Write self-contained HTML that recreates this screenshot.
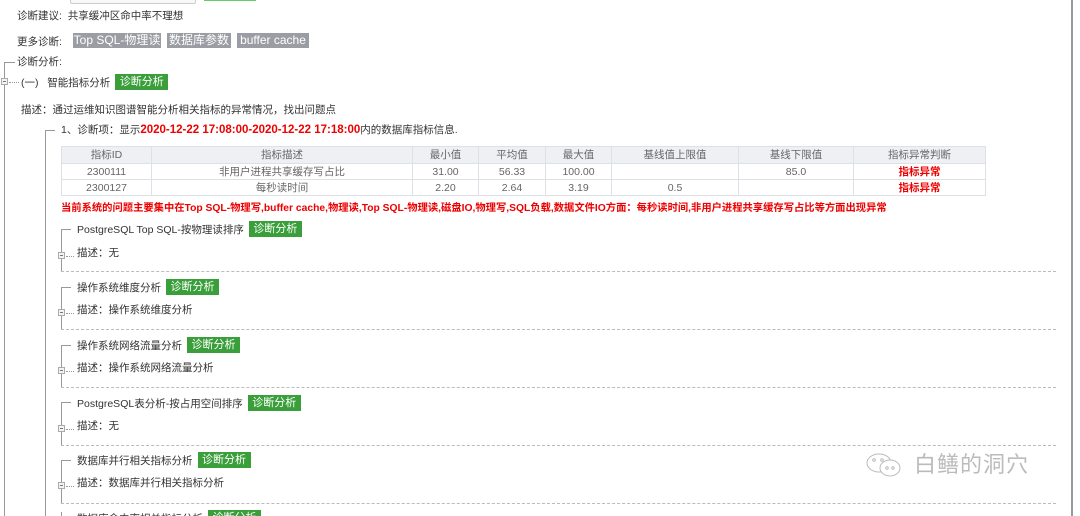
<!DOCTYPE html>
<html><head><meta charset="utf-8"><style>
*{margin:0;padding:0;box-sizing:border-box}
html,body{width:1080px;height:516px;overflow:hidden}
body{background:#fff;position:relative;font-family:"Liberation Sans","Noto Sans CJK SC",sans-serif;font-size:10.5px;color:#333}
.a{position:absolute;white-space:nowrap;line-height:14px}
.row{position:absolute;white-space:nowrap;display:flex;align-items:center;height:16px}
.g{display:inline-block;background:#3a9e3a;color:#fff;line-height:16px;height:16px;width:53px;text-align:center;font-size:11px;margin-left:5px}
.t{position:absolute;background:#9a9da3;color:#fff;line-height:15px;height:15px;text-align:center;font-size:12px}
.v{position:absolute;width:1px;background:#999}
.h{position:absolute;height:1px;background:#999}
.d{position:absolute;height:0;border-top:1px dashed #bbb}
.m{position:absolute;width:7px;height:7px;border:1px solid #aaa;background:#f4f4f4}
.m:after{content:"";position:absolute;left:1px;top:2px;width:3px;height:1px;background:#777}
.dot{position:absolute;height:0;border-top:1px dotted #999}
table{position:absolute;left:61px;top:146px;width:925px;border-collapse:collapse;font-size:10.5px;color:#666;table-layout:fixed}
td{border:1px solid #dde0e4;text-align:center;height:16px;line-height:14px;padding:0}
tr.hd td{background:#eef0f3;height:17px}
.r{color:#e00;font-weight:bold}
</style></head><body>
<div style="position:absolute;left:70px;top:-2px;width:126px;height:6px;border:1px solid #ccc;border-radius:2px;background:#f8f8f8"></div>
<div style="position:absolute;left:204px;top:0;width:52px;height:1px;background:#6c6"></div>
<div style="position:absolute;left:1071px;top:0;width:2px;height:516px;background:#999"></div>

<div class="a" style="left:17px;top:9px">诊断建议:&nbsp;&nbsp;共享缓冲区命中率不理想</div>
<div class="a" style="left:17px;top:35px">更多诊断:</div>
<div class="t" style="left:73px;top:33px;width:88px">Top SQL-物理读</div>
<div class="t" style="left:167px;top:33px;width:64px">数据库参数</div>
<div class="t" style="left:237px;top:33px;width:72px">buffer cache</div>

<div class="v" style="left:4px;top:62px;height:454px"></div>
<div class="h" style="left:4px;top:62px;width:11px"></div>
<div class="a" style="left:17px;top:55px">诊断分析:</div>
<div class="m" style="left:1px;top:78px"></div>
<div class="dot" style="left:9px;top:82px;width:10px"></div>
<div class="row" style="left:21px;top:74px">(一)&nbsp;&nbsp;&nbsp;智能指标分析<span class="g">诊断分析</span></div>
<div class="a" style="left:21px;top:103px">描述：通过运维知识图谱智能分析相关指标的异常情况，找出问题点</div>

<div class="v" style="left:45px;top:130px;height:386px"></div>
<div class="h" style="left:45px;top:130px;width:10px"></div>
<div class="a" style="left:61px;top:123px">1、诊断项：显示<span class="r" style="font-size:11.5px">2020-12-22 17:08:00-2020-12-22 17:18:00</span>内的数据库指标信息.</div>

<table>
<tr class="hd"><td style="width:90px">指标ID</td><td style="width:261px">指标描述</td><td style="width:66px">最小值</td><td style="width:67px">平均值</td><td style="width:66px">最大值</td><td style="width:127px">基线值上限值</td><td style="width:115px">基线下限值</td><td>指标异常判断</td></tr>
<tr><td>2300111</td><td>非用户进程共享缓存写占比</td><td>31.00</td><td>56.33</td><td>100.00</td><td></td><td>85.0</td><td class="r">指标异常</td></tr>
<tr><td>2300127</td><td>每秒读时间</td><td>2.20</td><td>2.64</td><td>3.19</td><td>0.5</td><td></td><td class="r">指标异常</td></tr>
</table>
<div class="a r" style="left:61px;top:202px;font-size:10.3px">当前系统的问题主要集中在Top SQL-物理写,buffer cache,物理读,Top SQL-物理读,磁盘IO,物理写,SQL负载,数据文件IO方面：每秒读时间,非用户进程共享缓存写占比等方面出现异常</div>

<div class="v" style="left:61px;top:229px;height:42px"></div><div class="h" style="left:61px;top:229px;width:10px"></div>
<div class="row" style="left:77px;top:221px">PostgreSQL Top SQL-按物理读排序<span class="g">诊断分析</span></div>
<div class="m" style="left:58px;top:252px"></div><div class="dot" style="left:66px;top:256px;width:8px"></div>
<div class="a" style="left:77px;top:246px">描述：无</div>
<div class="d" style="left:61px;top:271px;width:995px"></div>

<div class="v" style="left:61px;top:287px;height:42px"></div><div class="h" style="left:61px;top:287px;width:10px"></div>
<div class="row" style="left:77px;top:279px">操作系统维度分析<span class="g">诊断分析</span></div>
<div class="m" style="left:58px;top:309px"></div><div class="dot" style="left:66px;top:313px;width:8px"></div>
<div class="a" style="left:77px;top:303px">描述：操作系统维度分析</div>
<div class="d" style="left:61px;top:329px;width:995px"></div>

<div class="v" style="left:61px;top:345px;height:42px"></div><div class="h" style="left:61px;top:345px;width:10px"></div>
<div class="row" style="left:77px;top:337px">操作系统网络流量分析<span class="g">诊断分析</span></div>
<div class="m" style="left:58px;top:367px"></div><div class="dot" style="left:66px;top:371px;width:8px"></div>
<div class="a" style="left:77px;top:361px">描述：操作系统网络流量分析</div>
<div class="d" style="left:61px;top:387px;width:995px"></div>

<div class="v" style="left:61px;top:402px;height:43px"></div><div class="h" style="left:61px;top:402px;width:10px"></div>
<div class="row" style="left:77px;top:395px">PostgreSQL表分析-按占用空间排序<span class="g">诊断分析</span></div>
<div class="m" style="left:58px;top:425px"></div><div class="dot" style="left:66px;top:429px;width:8px"></div>
<div class="a" style="left:77px;top:419px">描述：无</div>
<div class="d" style="left:61px;top:445px;width:995px"></div>

<div class="v" style="left:61px;top:460px;height:43px"></div><div class="h" style="left:61px;top:460px;width:10px"></div>
<div class="row" style="left:77px;top:452px">数据库并行相关指标分析<span class="g">诊断分析</span></div>
<div class="m" style="left:58px;top:482px"></div><div class="dot" style="left:66px;top:486px;width:8px"></div>
<div class="a" style="left:77px;top:476px">描述：数据库并行相关指标分析</div>
<div class="d" style="left:61px;top:503px;width:995px"></div>

<div class="v" style="left:61px;top:512px;height:10px"></div>
<div class="row" style="left:77px;top:510px">数据库命中率相关指标分析<span class="g">诊断分析</span></div>

<svg style="position:absolute;left:865px;top:453px" width="44" height="26" viewBox="0 0 44 26">
<ellipse cx="14" cy="10" rx="12" ry="9" fill="none" stroke="#bbb" stroke-width="1"/>
<ellipse cx="25" cy="15" rx="10" ry="8" fill="#fff" stroke="#bbb" stroke-width="1"/>
<circle cx="9" cy="7" r="1.3" fill="none" stroke="#bbb"/><circle cx="17" cy="7" r="1.3" fill="none" stroke="#bbb"/>
<circle cx="22" cy="15" r="1.2" fill="none" stroke="#bbb"/><circle cx="28" cy="15" r="1.2" fill="none" stroke="#bbb"/>
</svg>
<div class="a" style="left:914px;top:452px;font-size:22px;line-height:26px;color:#bbb;letter-spacing:1px">白鳝的洞穴</div>
</body></html>
